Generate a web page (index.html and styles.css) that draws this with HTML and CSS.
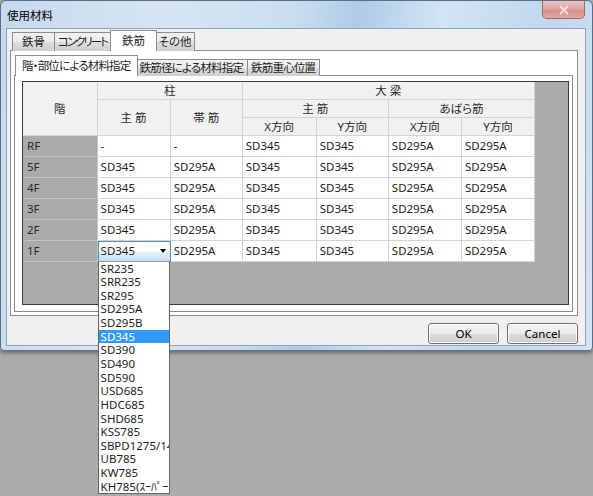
FILE: index.html
```html
<!DOCTYPE html>
<html>
  <head>
    <meta http-equiv="Content-Type" content="text/html;charset=UTF-8" />
    <title>使用材料</title>
    <link rel="stylesheet" href="styles.css">
  </head>
  <body>
    <div class="window">
      <div class="titlebar">
        <span class="title">使用材料</span>
        <div class="close">
          <svg width="12" height="10" viewBox="0 0 12 10">
            <path d="M2 1 L10 9 M10 1 L2 9" stroke="#f3dcdb" stroke-width="2" />
          </svg>
        </div>
      </div>

      <div class="client">
        <div class="tabs outer_tabs">
          <div class="tab tab_steel">鉄骨</div>
          <div class="tab tab_concrete">コンクリート</div>
          <div class="tab tab_rebar _active">鉄筋</div>
          <div class="tab tab_other">その他</div>
        </div>

        <div class="panel outer_panel">
          <div class="tabs inner_tabs">
            <div class="tab _active">階・部位による材料指定</div>
            <div class="tab">鉄筋径による材料指定</div>
            <div class="tab">鉄筋重心位置</div>
          </div>

          <div class="panel inner_panel">
            <div class="grid">
              <table>
                <colgroup>
                  <col class="col_floor" />
                  <col class="col_w73" />
                  <col class="col_w72" />
                  <col class="col_w74" />
                  <col class="col_w72" />
                  <col class="col_w73" />
                  <col class="col_w73" />
                </colgroup>
                <tr class="head_row">
                  <th rowspan="3">階</th>
                  <th colspan="2">柱</th>
                  <th colspan="4">大 梁</th>
                </tr>
                <tr class="head_row">
                  <th rowspan="2">主 筋</th>
                  <th rowspan="2">帯 筋</th>
                  <th colspan="2">主 筋</th>
                  <th colspan="2">あばら筋</th>
                </tr>
                <tr class="head_row">
                  <th>X方向</th>
                  <th>Y方向</th>
                  <th>X方向</th>
                  <th>Y方向</th>
                </tr>
                <tr>
                  <td class="floor">RF</td>
                  <td>-</td>
                  <td>-</td>
                  <td>SD345</td>
                  <td>SD345</td>
                  <td>SD295A</td>
                  <td>SD295A</td>
                </tr>
                <tr>
                  <td class="floor">5F</td>
                  <td>SD345</td>
                  <td>SD295A</td>
                  <td>SD345</td>
                  <td>SD345</td>
                  <td>SD295A</td>
                  <td>SD295A</td>
                </tr>
                <tr>
                  <td class="floor">4F</td>
                  <td>SD345</td>
                  <td>SD295A</td>
                  <td>SD345</td>
                  <td>SD345</td>
                  <td>SD295A</td>
                  <td>SD295A</td>
                </tr>
                <tr>
                  <td class="floor">3F</td>
                  <td>SD345</td>
                  <td>SD295A</td>
                  <td>SD345</td>
                  <td>SD345</td>
                  <td>SD295A</td>
                  <td>SD295A</td>
                </tr>
                <tr>
                  <td class="floor">2F</td>
                  <td>SD345</td>
                  <td>SD295A</td>
                  <td>SD345</td>
                  <td>SD345</td>
                  <td>SD295A</td>
                  <td>SD295A</td>
                </tr>
                <tr>
                  <td class="floor">1F</td>
                  <td class="combo_cell">
                    <div class="combo">
                      <span>SD345</span>
                      <span class="arrow"></span>
                      <!-- open list of the 1F column bar -->
                      <ul class="dropdown">
                        <li>SR235</li>
                        <li>SRR235</li>
                        <li>SR295</li>
                        <li>SD295A</li>
                        <li>SD295B</li>
                        <li class="_selected">SD345</li>
                        <li>SD390</li>
                        <li>SD490</li>
                        <li>SD590</li>
                        <li>USD685</li>
                        <li>HDC685</li>
                        <li>SHD685</li>
                        <li>KSS785</li>
                        <li>SBPD1275/1420</li>
                        <li>UB785</li>
                        <li>KW785</li>
                        <li>KH785(ｽｰﾊﾟｰﾌｰﾌﾟ)</li>
                      </ul>
                    </div>
                  </td>
                  <td>SD295A</td>
                  <td>SD345</td>
                  <td>SD345</td>
                  <td>SD295A</td>
                  <td>SD295A</td>
                </tr>
              </table>
            </div>
          </div>
        </div>

        <div class="buttons">
          <button class="button">OK</button>
          <button class="button">Cancel</button>
        </div>
      </div>
    </div>
  </body>
</html>
```

FILE: styles.css
```css
html,
body {
  margin: 0;
  height: 100%;
  overflow: hidden;
}
body {
  background-color: #ababab;
  font-family: "Noto Sans", "Noto Sans CJK JP", sans-serif;
  font-size: 11.5px;
  font-feature-settings: "palt";
  color: #1e1e1e;
}

.window {
  box-sizing: border-box;
  width: 593px;
  height: 351px;
  border: 1px solid #5a6f86;
  border-radius: 6px 6px 4px 4px;
  padding: 0 6px 4px 5px;
  display: flex;
  flex-direction: column;
  background: linear-gradient(
    100deg,
    #c6d9ed 0%,
    #d7e5f3 25%,
    #cadef1 45%,
    #aecbe8 55%,
    #d2e4f5 68%,
    #c0d7ee 85%,
    #d4e4f3 100%
  );
  box-shadow: 0 2px 4px rgba(0, 0, 0, 0.4);
}
.titlebar {
  height: 27px;
  display: flex;
  align-items: center;
  flex-shrink: 0;
}
.title {
  margin-left: 1px;
  color: #000;
}
.close {
  align-self: flex-start;
  margin-left: auto;
  margin-right: 1px;
  width: 43px;
  height: 18px;
  box-sizing: border-box;
  border: 1px solid #a26966;
  border-top: none;
  border-radius: 0 0 5px 5px;
  background: linear-gradient(#ecc4c2, #dea3a0 50%, #d38c88 51%, #e0aaa7);
  display: flex;
  align-items: center;
  justify-content: center;
}

.client {
  flex: 1;
  display: flex;
  flex-direction: column;
  background-color: #f0f0f0;
  border: 1px solid #8ea4bb;
  padding: 1px 7px 1px 3px;
}

.tabs {
  display: flex;
  align-items: flex-end;
  height: 21px;
  padding-left: 2px;
  margin-bottom: -1px;
  position: relative;
  z-index: 1;
  flex-shrink: 0;
}
.tab {
  box-sizing: border-box;
  height: 19px;
  line-height: 17px;
  padding: 0 6px;
  margin-right: -1px;
  border: 1px solid #898c95;
  border-bottom: none;
  background: linear-gradient(#f2f2f2, #ebebeb 50%, #dddddd 51%, #cfcfcf);
  white-space: nowrap;
}
.tab._active {
  height: 21px;
  line-height: 19px;
  margin: 0 -2px;
  background: #fff;
  position: relative;
  z-index: 2;
}
.outer_tabs .tab {
  padding: 0;
  text-align: center;
}
.tab_steel {
  width: 43px;
}
.tab_concrete {
  width: 59px;
  padding-right: 2px !important;
  letter-spacing: -2px;
}
.tab_rebar {
  width: 47px;
}
.tab_other {
  width: 40px;
}

.panel {
  border: 1px solid #898c95;
  background-color: #fff;
  display: flex;
  flex-direction: column;
}
.outer_panel {
  flex: 1;
  padding: 0 4px 3px 3px;
}
.inner_tabs {
  height: 25px;
  padding-left: 3px;
  letter-spacing: -0.8px;
}
.inner_tabs .tab {
  height: 17px;
  line-height: 15px;
  padding: 0 4px 0 3px;
}
.inner_tabs .tab._active {
  height: 21px;
  line-height: 20px;
  padding: 0 6px;
}
.inner_panel {
  flex: 1;
  padding: 5px 3px 6px 7px;
}

.grid {
  flex: 1;
  border: 1px solid #3c3c3c;
  background-color: #ababab;
}
table {
  border-collapse: collapse;
  table-layout: fixed;
  width: 512px;
}
.col_floor {
  width: 74px;
}
.col_w72 {
  width: 72px;
}
.col_w73 {
  width: 73px;
}
.col_w74 {
  width: 74px;
}
th,
td {
  padding: 0 3px;
  font-weight: normal;
  white-space: nowrap;
  overflow: hidden;
}
th {
  height: 17px;
  line-height: 16px;
  background-color: #f1f1f1;
  border: 1px solid #d3d3d3;
  color: #2a2a2a;
  text-align: center;
}
tr:first-child th {
  border-top: none;
}
th:first-child,
td:first-child {
  border-left: none;
}
td {
  height: 20px;
  line-height: 18px;
  background-color: #fff;
  border: 1px solid #d4d4d4;
  text-align: left;
}
td.floor {
  background-color: #ababab;
  border-color: #c4c4c4;
  padding-left: 4px;
  color: #2a2a2a;
}

td.combo_cell {
  padding: 0;
  overflow: visible;
}
.combo {
  position: relative;
  box-sizing: border-box;
  height: 21px;
  margin: -1px -1px -1px 0;
  border: 1px solid #4a8fd0;
  background: linear-gradient(#ffffff 45%, #e3f0fb 60%, #c3def4);
  display: flex;
  align-items: center;
  padding-left: 2px;
}
.arrow {
  margin-left: auto;
  margin-right: 4px;
  width: 0;
  height: 0;
  border-left: 3.5px solid transparent;
  border-right: 3.5px solid transparent;
  border-top: 4px solid #000;
}
.dropdown {
  position: absolute;
  top: 100%;
  left: -1px;
  width: 72px;
  box-sizing: border-box;
  margin: 0;
  padding: 0;
  list-style: none;
  background-color: #fff;
  border: 1px solid #646464;
  border-top-color: #9a9a9a;
  z-index: 5;
}
.dropdown li {
  height: 13.65px;
  line-height: 13.65px;
  padding-left: 2px;
  white-space: nowrap;
  overflow: hidden;
  color: #1e1e1e;
}
.dropdown li._selected {
  background-color: #3399ff;
  color: #fff;
}

.buttons {
  display: flex;
  justify-content: flex-end;
  gap: 8px;
  margin-top: 7px;
  flex-shrink: 0;
}
.button {
  width: 71px;
  height: 21px;
  padding: 0;
  font-family: inherit;
  font-size: 11.5px;
  color: #000;
  border: 1px solid #707070;
  border-radius: 3px;
  background: linear-gradient(#f3f3f3, #ebebeb 50%, #dddddd 51%, #cfcfcf);
  box-shadow: inset 0 0 0 1px #fbfbfb;
}
```
